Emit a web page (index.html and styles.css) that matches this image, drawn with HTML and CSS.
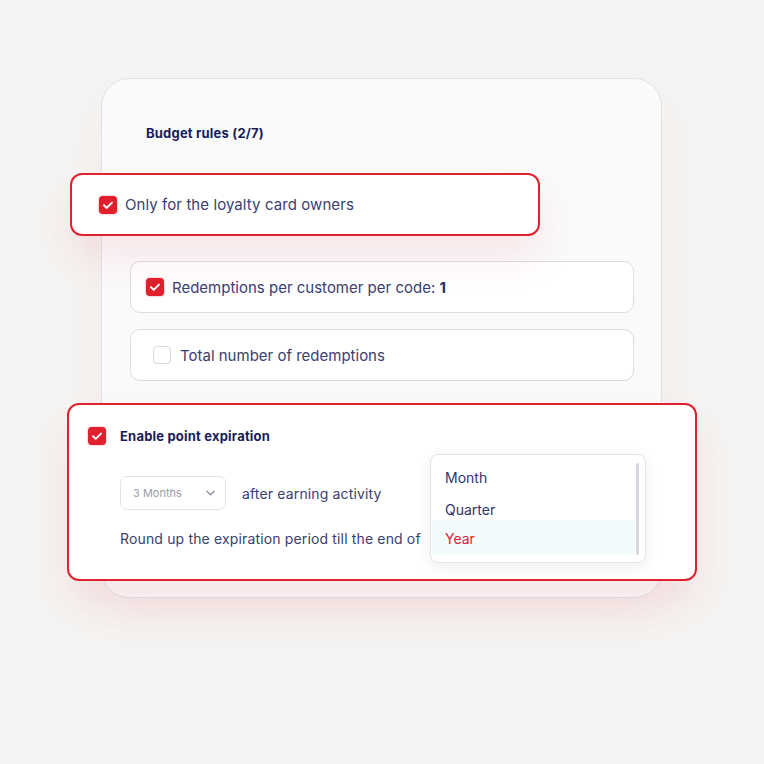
FILE: index.html
```html
<!DOCTYPE html>
<html lang="en">
<head>
  <meta charset="UTF-8">
  <title>Budget rules</title>
  <link rel="stylesheet" href="styles.css">
</head>
<body>
  <div class="stage">
    <!-- Main settings card -->
    <div class="card">
      <h2 class="card-title">Budget rules (2/7)</h2>

      <div class="popout popout-owners">
        <span class="check is-on"><svg viewBox="0 0 18 18"><path d="M5 9.3l2.7 2.6L13 6.6"/></svg></span>
        <span class="popout-label">Only for the loyalty card owners</span>
      </div>

      <div class="rule">
        <span class="check is-on"><svg viewBox="0 0 18 18"><path d="M5 9.3l2.7 2.6L13 6.6"/></svg></span>
        <span>Redemptions per customer per code: <b>1</b></span>
      </div>

      <div class="rule rule-off">
        <span class="check"></span>
        <span>Total number of redemptions</span>
      </div>

      <div class="popout popout-expiry">
        <div class="expiry-head">
          <span class="check is-on"><svg viewBox="0 0 18 18"><path d="M5 9.3l2.7 2.6L13 6.6"/></svg></span>
          <span class="expiry-title">Enable point expiration</span>
        </div>
        <div class="expiry-line">
          <div class="select">
            <span>3 Months</span>
            <svg viewBox="0 0 10 6"><path d="M1 1l4 4 4-4"/></svg>
          </div>
          <span>after earning activity</span>
        </div>
        <div class="expiry-line expiry-round">
          <span>Round up the expiration period till the end of</span>
        </div>

        <!-- Open period dropdown -->
        <ul class="menu">
          <li>Month</li>
          <li class="is-quarter">Quarter</li>
          <li class="is-active">Year</li>
        </ul>
      </div>
    </div>
  </div>
</body>
</html>
```

FILE: styles.css
```css
/* Page base */
html, body {
  margin: 0;
  padding: 0;
  width: 100%;
  height: 100%;
  background: #f5f4f2;
  font-family: "Inter", "Liberation Sans", sans-serif;
  color: #3a4070;
}
.stage {
  padding: 78px 0 0 101px;
}
/* Main card */
.card {
  width: 561px;
  height: 520px;
  box-sizing: border-box;
  border: 1px solid #e1e0ea;
  border-radius: 28px;
  background: #fafafb;
  padding: 45px 0 0;
  box-shadow: 0 24px 40px rgba(230, 120, 120, 0.06);
}
.card-title {
  margin: 0 0 31px 44px;
  font-size: 13px;
  font-weight: 700;
  line-height: 18px;
  letter-spacing: 0.2px;
  color: #161d5b;
}
/* Checkbox */
.check {
  flex: none;
  width: 18px;
  height: 18px;
  box-sizing: border-box;
  border-radius: 4px;
  border: 1px solid #d8d8e4;
  background: #fff;
  display: flex;
  align-items: center;
  justify-content: center;
}
.check.is-on {
  border: none;
  background: #e11f2d;
  box-shadow: 0 0 2px rgba(225, 31, 45, 0.6);
}
.check svg {
  width: 18px;
  height: 18px;
}
.check path {
  fill: none;
  stroke: #fff;
  stroke-width: 2;
  stroke-linecap: round;
  stroke-linejoin: round;
}
/* Red popout cards */
.popout {
  box-sizing: border-box;
  border: 2px solid #e0212f;
  border-radius: 12px;
  background: #fff;
  box-shadow: 0 22px 40px rgba(224, 33, 47, 0.09);
}
.popout-owners {
  width: 470px;
  height: 63px;
  margin: 0 0 25px -32px;
  display: flex;
  align-items: center;
  gap: 8px;
  padding-left: 27px;
  font-size: 15px;
  letter-spacing: 0.08px;
  position: relative;
}
/* Plain rule rows */
.rule {
  width: 504px;
  height: 52px;
  margin: 0 0 16px 28px;
  box-sizing: border-box;
  border: 1px solid #dcdce8;
  border-radius: 10px;
  background: #fff;
  display: flex;
  align-items: center;
  gap: 8px;
  padding-left: 15px;
  font-size: 15px;
}
.rule b {
  font-weight: 700;
  color: #2a2f62;
}
.rule-off {
  padding-left: 22px;
  gap: 9px;
  margin-bottom: 22px;
}
/* Expiration popout */
.popout-expiry {
  position: relative;
  width: 630px;
  height: 178px;
  margin-left: -35px;
  padding: 22px 0 0 19px;
}
.expiry-head {
  display: flex;
  align-items: center;
  gap: 14px;
}
.expiry-title {
  font-size: 13px;
  font-weight: 700;
  letter-spacing: 0.2px;
  color: #161d5b;
}
.expiry-line {
  display: flex;
  align-items: center;
  gap: 16px;
  margin: 31px 0 0 32px;
  font-size: 14px;
  letter-spacing: 0.15px;
}
.expiry-round {
  margin-top: 20px;
}
.select {
  width: 106px;
  height: 34px;
  box-sizing: border-box;
  border: 1px solid #e2e2ea;
  border-radius: 7px;
  display: flex;
  align-items: center;
  justify-content: space-between;
  padding: 0 10px 0 12px;
  font-size: 11px;
  letter-spacing: 0;
  color: #9a9db0;
}
.select svg {
  width: 9px;
  height: 6px;
}
.select path {
  fill: none;
  stroke: #8f93a8;
  stroke-width: 1.5;
  stroke-linecap: round;
}
/* Dropdown menu */
.menu {
  position: absolute;
  left: 361px;
  top: 49px;
  width: 216px;
  height: 109px;
  box-sizing: border-box;
  margin: 0;
  padding: 8px 10px 0 1px;
  list-style: none;
  background: #fff;
  border: 1px solid #e3e3ea;
  border-radius: 8px;
  box-shadow: 0 4px 14px rgba(40, 40, 80, 0.08);
  font-size: 14px;
  color: #2f3566;
  overflow: hidden;
}
.menu::after {
  content: "";
  position: absolute;
  right: 6px;
  top: 8px;
  width: 3px;
  height: 92px;
  border-radius: 2px;
  background: #d6d6e0;
}
.menu li {
  height: 30px;
  line-height: 30px;
  padding-left: 13px;
}
.menu li.is-quarter {
  height: 27px;
  line-height: 34px;
}
.menu li.is-active {
  height: 34px;
  line-height: 38px;
  background: #f1fbfc;
  color: #e0212f;
}
```
